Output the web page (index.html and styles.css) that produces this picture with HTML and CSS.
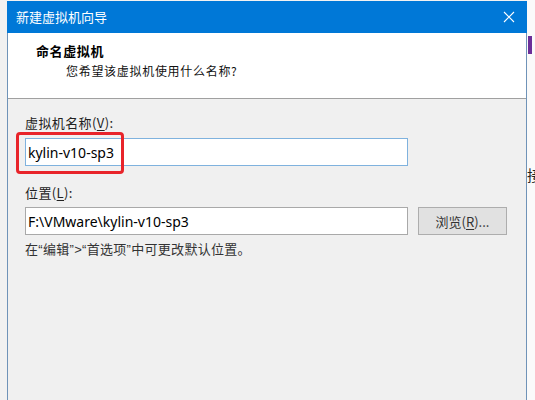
FILE: index.html
```html
<!DOCTYPE html>
<html lang="zh-CN">
<head>
<meta charset="utf-8">
<title>新建虚拟机向导</title>
<link rel="stylesheet" href="styles.css">
</head>
<body>
<div class="screen">
  <div class="left-strip"></div>
  <div class="dialog">
    <div class="titlebar">
      <span class="title">新建虚拟机向导</span>
      <svg class="close" width="12" height="12" viewBox="0 0 12 12" aria-hidden="true">
        <path d="M1 1 L11 11 M11 1 L1 11" stroke="#ffffff" stroke-width="1.1" fill="none"/>
      </svg>
    </div>
    <div class="content">
      <div class="header">
        <div class="h-title">命名虚拟机</div>
        <div class="h-sub">您希望该虚拟机使用什么名称?</div>
      </div>
      <div class="body">
        <div class="label first">虚拟机名称(<u>V</u>):</div>
        <div class="name-wrap">
          <div class="input focus">kylin-v10-sp3</div>
          <div class="highlight"></div>
        </div>
        <div class="label second">位置(<u>L</u>):</div>
        <div class="row">
          <div class="input path">F:\VMware\kylin-v10-sp3</div>
          <div class="button">浏览(<u>R</u>)...</div>
        </div>
        <div class="hint">在“编辑”&gt;“首选项”中可更改默认位置。</div>
      </div>
    </div>
  </div>
  <div class="right-strip">
    <div class="purple"></div>
    <div class="peek">接</div>
  </div>
</div>
</body>
</html>
```

FILE: styles.css
```css
* { box-sizing: border-box; }
html, body { margin: 0; padding: 0; }
body {
  width: 535px;
  height: 400px;
  overflow: hidden;
  background: #f2f2f2;
  font-family: "Noto Sans CJK SC", "Noto Sans", sans-serif;
  color: #111;
}
.screen {
  display: flex;
  width: 535px;
  height: 400px;
}
.left-strip {
  width: 7px;
  flex: none;
  background: #f1f1f1;
}
.dialog {
  width: 520px;
  flex: none;
  margin-top: 1px;
  display: flex;
  flex-direction: column;
}
.titlebar {
  height: 32px;
  background: #0078d7;
  display: flex;
  align-items: center;
  justify-content: space-between;
  padding: 0 12px 0 9px;
}
.title {
  color: #ffffff;
  font-size: 13px;
  line-height: 16px;
  margin-top: -1px;
}
.close { display: block; margin-top: -1px; }
.content {
  flex: 1;
  border-left: 1px solid #6f93b8;
  border-right: 1px solid #6f93b8;
  display: flex;
  flex-direction: column;
}
.header {
  height: 66px;
  background: #ffffff;
  border-bottom: 1px solid #a0a0a0;
  padding: 10px 0 0 28px;
}
.h-title {
  font-size: 13px;
  font-weight: 700;
  line-height: 16px;
  letter-spacing: 0.6px;
  color: #000;
}
.h-sub {
  font-size: 12px;
  line-height: 16px;
  margin: 4px 0 0 30px;
  letter-spacing: 0.7px;
  color: #111;
}
.body {
  flex: 1;
  background: #f0f0f0;
  padding: 16px 0 0 17px;
}
.label {
  font-size: 13px;
  line-height: 16px;
  letter-spacing: 0.4px;
  color: #222;
}
.label u { text-decoration-thickness: 1px; text-underline-offset: 2px; }
.label.first { margin-bottom: 7px; }
.label.second { margin: 19px 0 6px; }
.name-wrap {
  position: relative;
  width: 383px;
}
.input {
  width: 383px;
  height: 28px;
  background: #ffffff;
  border: 1px solid #a9a9a9;
  padding: 0 0 0 2px;
  display: flex;
  align-items: center;
  font-family: "Noto Sans", sans-serif;
  font-size: 14px;
  color: #000;
}
.input.focus { border-color: #7fb2de; }
.highlight {
  position: absolute;
  left: -9px;
  top: -6px;
  width: 108px;
  height: 42px;
  border: 3px solid #e8242a;
  border-radius: 4px;
}
.row {
  display: flex;
  gap: 10px;
}
.button {
  width: 89px;
  height: 28px;
  background: #e1e1e1;
  border: 1px solid #adadad;
  display: flex;
  align-items: center;
  justify-content: center;
  font-size: 13px;
  color: #333;
}
.button u { text-underline-offset: 2px; }
.hint {
  margin-top: 7px;
  font-family: "Liberation Sans", "Noto Sans CJK SC", sans-serif;
  font-size: 13px;
  line-height: 16px;
  letter-spacing: 0.3px;
  color: #333;
}
.right-strip {
  width: 8px;
  flex: none;
  background: #fafafa;
  overflow: hidden;
  position: relative;
}
.purple {
  position: absolute;
  left: 1px;
  top: 36px;
  width: 4px;
  height: 18px;
  background: #6b2f99;
}
.peek {
  position: absolute;
  left: 0px;
  top: 166px;
  font-size: 15px;
  line-height: 18px;
  color: #222;
}
```
